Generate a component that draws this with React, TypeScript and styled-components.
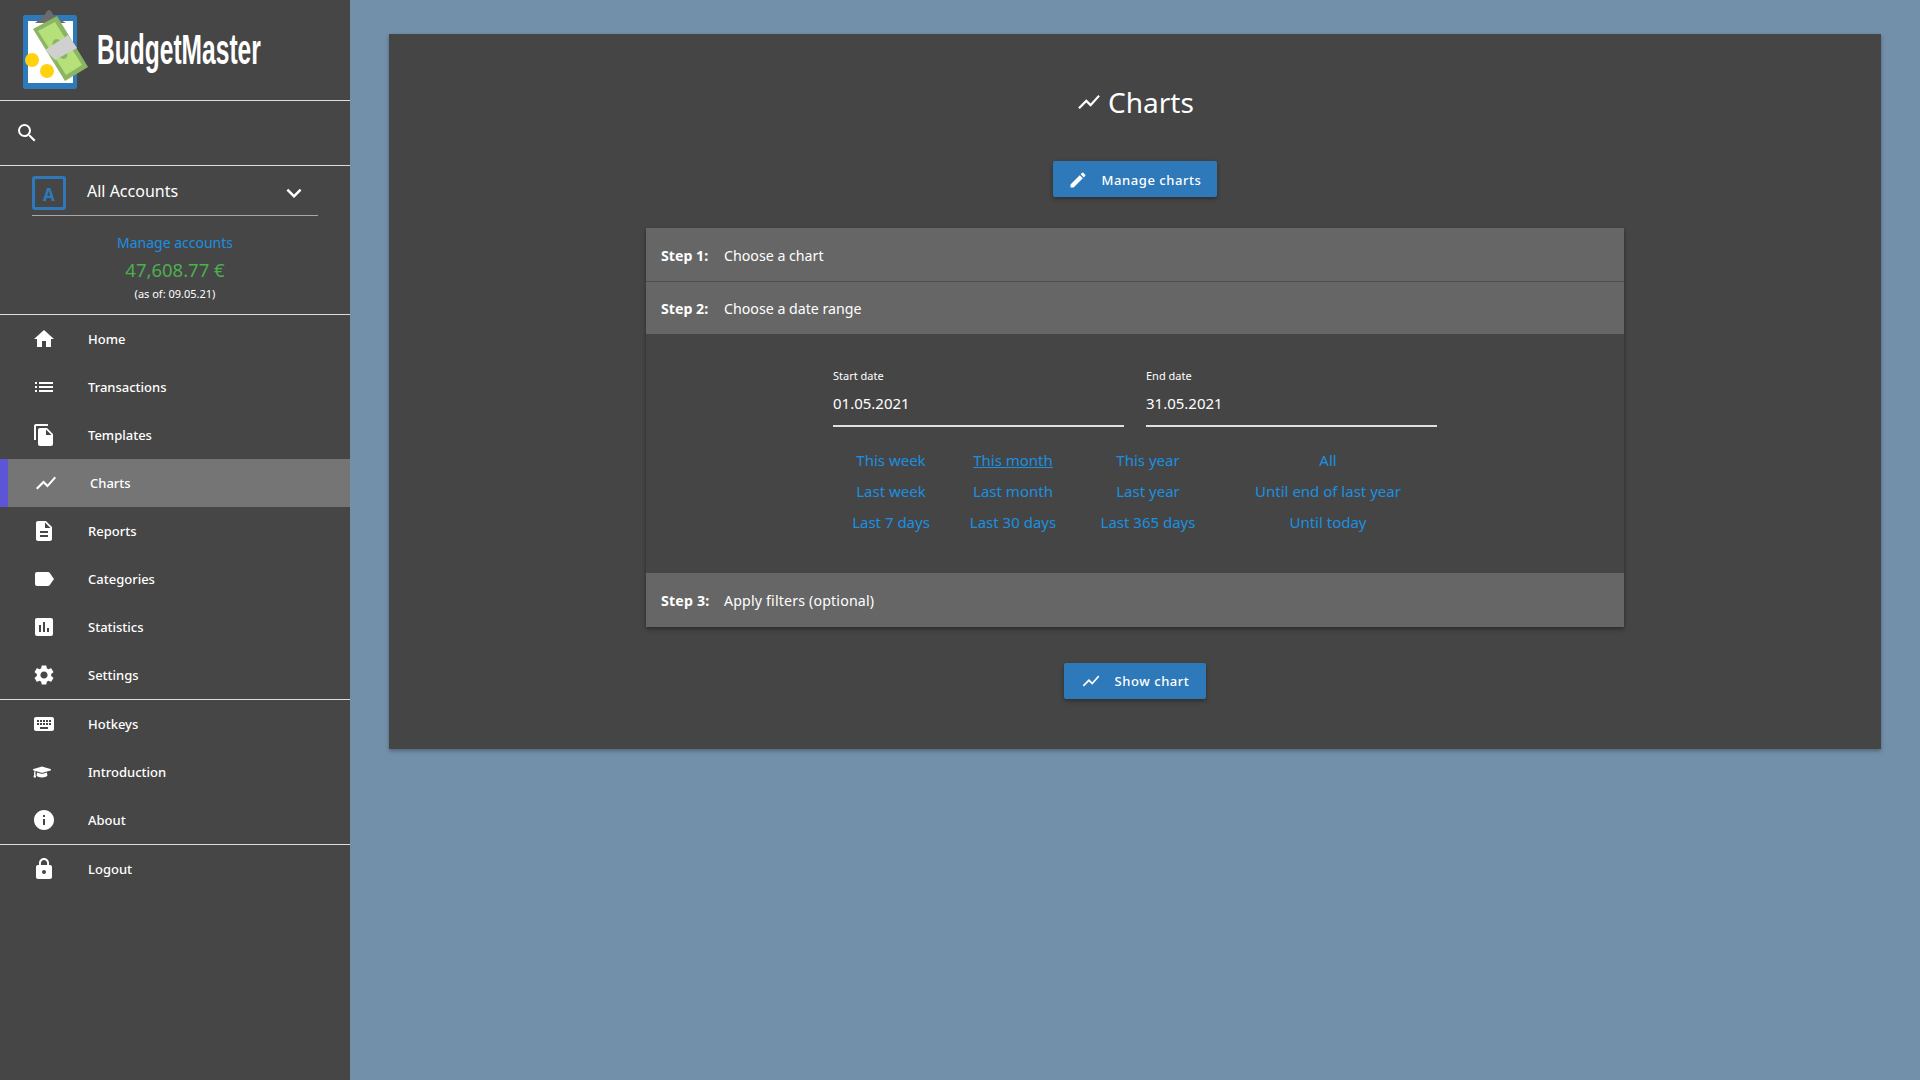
import React from "react";
import styled, { createGlobalStyle } from "styled-components";
import {
  MdAssessment,
  MdDescription,
  MdEdit,
  MdExpandMore,
  MdFileCopy,
  MdHome,
  MdInfo,
  MdKeyboard,
  MdLabel,
  MdList,
  MdLock,
  MdSearch,
  MdSettings,
  MdShowChart,
} from "react-icons/md";
import { FaGraduationCap } from "react-icons/fa";

const GlobalStyle = createGlobalStyle`
  html, body {
    margin: 0;
    padding: 0;
    background-color: #7390aa;
    font-family: "Noto Sans", "Open Sans", sans-serif;
    color: #ffffff;
  }
  * {
    box-sizing: border-box;
  }
`;

const Page = styled.div`
  display: flex;
  width: 100%;
  height: 1080px;
  overflow: hidden;
`;

const Sidebar = styled.nav`
  width: 350px;
  flex-shrink: 0;
  background-color: #464646;
  display: flex;
  flex-direction: column;
`;

const Section = styled.div`
  border-bottom: 1px solid #dcdcdc;
`;

const LogoBar = styled(Section)`
  height: 101px;
  display: flex;
  align-items: center;
  padding-left: 23px;
  gap: 8px;
`;

const LogoImage = styled.svg`
  flex-shrink: 0;
  margin-bottom: 11px;
`;

const LogoTitle = styled.div`
  font-family: "Liberation Sans", sans-serif;
  font-weight: 700;
  font-size: 42px;
  line-height: 1;
  color: #ffffff;
  transform: scaleX(0.585);
  transform-origin: left center;
  white-space: nowrap;
  margin-top: -1px;
`;

const SearchBar = styled(Section)`
  height: 65px;
  display: flex;
  align-items: center;
  padding-left: 15px;
  font-size: 24px;
`;

const AccountBox = styled(Section)`
  height: 149px;
  padding: 10px 32px 0;
  display: flex;
  flex-direction: column;
  align-items: center;
`;

const AccountSelect = styled.div`
  width: 286px;
  height: 40px;
  flex-shrink: 0;
  border-bottom: 1px solid #a8a8a8;
  display: flex;
  align-items: flex-start;
`;

const AccountIcon = styled.div`
  width: 34px;
  height: 34px;
  border: 3px solid #2e79b9;
  border-radius: 3px;
  color: #2e79b9;
  font-weight: 700;
  font-size: 17px;
  display: flex;
  align-items: center;
  justify-content: center;
  padding-top: 3px;
`;

const AccountName = styled.div`
  flex: 1;
  margin-left: 21px;
  font-size: 16px;
  line-height: 30px;
`;

const Chevron = styled.div`
  font-size: 30px;
  line-height: 0;
  margin: 2px 9px 0 0;
`;

const ManageLink = styled.a`
  margin-top: 17px;
  font-size: 14px;
  line-height: 20px;
  color: #1a90e0;
`;

const Balance = styled.div`
  margin-top: 5px;
  font-size: 18.5px;
  line-height: 24px;
  color: #4caf50;
`;

const AsOf = styled.div`
  margin-top: 4px;
  font-size: 11px;
  line-height: 16px;
`;

const NavItem = styled.a<{ $active?: boolean }>`
  height: 48px;
  display: flex;
  align-items: center;
  font-size: 13px;
  font-weight: 500;
  color: #ffffff;
  background-color: ${(props) => (props.$active ? "#757575" : "transparent")};
  border-left: ${(props) => (props.$active ? "8px solid #5c55d6" : "none")};
  padding-left: ${(props) => (props.$active ? "26px" : "32px")};
`;

const NavIcon = styled.span`
  width: 24px;
  height: 24px;
  font-size: 24px;
  line-height: 0;
  margin-right: 32px;
  display: flex;
  align-items: center;
  justify-content: center;
`;

const SmallIcon = styled(FaGraduationCap)`
  font-size: 18px;
  margin-left: -5px;
`;

const Main = styled.main`
  flex: 1;
  padding: 34px 39px 0;
`;

const Card = styled.section`
  background-color: #454545;
  height: 715px;
  box-shadow: 0 2px 4px rgba(0, 0, 0, 0.3);
  display: flex;
  flex-direction: column;
  align-items: center;
  padding-top: 46px;
`;

const Headline = styled.h1`
  margin: 0;
  height: 44px;
  font-size: 28px;
  font-weight: 400;
  line-height: 44px;
  display: flex;
  align-items: center;
  gap: 6px;
`;

const HeadlineIcon = styled(MdShowChart)`
  font-size: 26px;
`;

const Button = styled.button`
  height: 36px;
  border: none;
  border-radius: 2px;
  background-color: #2e79b9;
  color: #ffffff;
  font-family: inherit;
  font-size: 13px;
  font-weight: 500;
  letter-spacing: 0.55px;
  display: flex;
  align-items: center;
  gap: 14px;
  box-shadow: 0 2px 4px rgba(0, 0, 0, 0.35);

  svg {
    font-size: 20px;
  }
`;

const TopButton = styled(Button)`
  margin-top: 37px;
  padding: 1px 16px 0 15px;
`;

const BottomButton = styled(Button)`
  margin-top: 36px;
  padding: 0 17px;
`;

const Accordion = styled.div`
  width: 978px;
  margin-top: 31px;
  height: 399px;
  display: flex;
  flex-direction: column;
  box-shadow: 0 2px 4px rgba(0, 0, 0, 0.4);
`;

const StepHeader = styled.div`
  height: 52px;
  flex-shrink: 0;
  background-color: #666666;
  display: flex;
  align-items: center;
  padding-left: 15px;
  font-size: 14.2px;
`;

const FirstStepHeader = styled(StepHeader)`
  height: 54px;
  padding-top: 2px;
  border-bottom: 1px solid #4d4d4d;
`;

const LastStepHeader = styled(StepHeader)`
  height: 54px;
  letter-spacing: 0.16px;
`;

const StepLabel = styled.strong`
  width: 63px;
  font-weight: 700;
`;

const StepBody = styled.div`
  flex: 1;
  padding: 34px 0 0 187px;
`;

const DateRow = styled.div`
  display: flex;
  gap: 22px;
  width: 604px;
`;

const DateField = styled.div`
  width: 291px;
`;

const DateLabel = styled.div`
  font-size: 11px;
  line-height: 16px;
`;

const DateValue = styled.div`
  margin-top: 7px;
  height: 36px;
  border-bottom: 2px solid #e0e0e0;
  font-size: 15px;
  line-height: 24px;
`;

const Presets = styled.div`
  width: 604px;
  margin-top: 17px;
  display: grid;
  grid-template-columns: 116px 128px 142px 218px;
  grid-auto-rows: 31px;
  align-items: center;
  justify-items: center;
`;

const Preset = styled.a<{ $active?: boolean }>`
  font-size: 15px;
  color: #1a90e0;
  text-decoration: ${(props) => (props.$active ? "underline" : "none")};
  white-space: nowrap;
`;

function Logo() {
  return (
    <LogoImage width="66" height="90" viewBox="23 0 66 90">
      <rect x="23" y="15" width="54" height="74" rx="2" fill="#2e79b9" />
      <rect x="28" y="21" width="45" height="62" fill="#ffffff" />
      <path d="M35 23 L44 16 L47 11 Q49 9 51 11 L54 16 L66 23 Z" fill="#6b6b6b" />
      <path d="M33 29 L57 16 L88 67 L65 81 Z" fill="#8bb563" />
      <path d="M38 31 L55 22 L82 65 L66 75 Z" fill="#b5e07a" />
      <ellipse cx="60" cy="49" rx="6" ry="11" transform="rotate(-30 60 49)" fill="#8bb563" />
      <path d="M45 50 L68 35 L77 48 L55 60 Z" fill="#d0d0d0" />
      <circle cx="32" cy="60" r="7" fill="#ffd10f" />
      <circle cx="47" cy="71" r="7" fill="#ffd10f" />
    </LogoImage>
  );
}

const mainNav = [
  { label: "Home", icon: <MdHome /> },
  { label: "Transactions", icon: <MdList /> },
  { label: "Templates", icon: <MdFileCopy /> },
  { label: "Charts", icon: <MdShowChart />, active: true },
  { label: "Reports", icon: <MdDescription /> },
  { label: "Categories", icon: <MdLabel /> },
  { label: "Statistics", icon: <MdAssessment /> },
  { label: "Settings", icon: <MdSettings /> },
];

const helpNav = [
  { label: "Hotkeys", icon: <MdKeyboard /> },
  { label: "Introduction", icon: <SmallIcon /> },
  { label: "About", icon: <MdInfo /> },
];

const presets = [
  "This week",
  "This month",
  "This year",
  "All",
  "Last week",
  "Last month",
  "Last year",
  "Until end of last year",
  "Last 7 days",
  "Last 30 days",
  "Last 365 days",
  "Until today",
];

const App: React.FC = () => {
  return (
    <Page>
      <GlobalStyle />
      <Sidebar>
        <LogoBar>
          <Logo />
          <LogoTitle>BudgetMaster</LogoTitle>
        </LogoBar>
        <SearchBar>
          <MdSearch />
        </SearchBar>
        <AccountBox>
          <AccountSelect>
            <AccountIcon>A</AccountIcon>
            <AccountName>All Accounts</AccountName>
            <Chevron>
              <MdExpandMore />
            </Chevron>
          </AccountSelect>
          <ManageLink>Manage accounts</ManageLink>
          <Balance>47,608.77 €</Balance>
          <AsOf>(as of: 09.05.21)</AsOf>
        </AccountBox>
        <Section>
          {mainNav.map((item) => (
            <NavItem key={item.label} $active={item.active}>
              <NavIcon>{item.icon}</NavIcon>
              {item.label}
            </NavItem>
          ))}
        </Section>
        <Section>
          {helpNav.map((item) => (
            <NavItem key={item.label}>
              <NavIcon>{item.icon}</NavIcon>
              {item.label}
            </NavItem>
          ))}
        </Section>
        <NavItem>
          <NavIcon>
            <MdLock />
          </NavIcon>
          Logout
        </NavItem>
      </Sidebar>
      <Main>
        <Card>
          <Headline>
            <HeadlineIcon />
            Charts
          </Headline>
          <TopButton>
            <MdEdit />
            Manage charts
          </TopButton>
          <Accordion>
            <FirstStepHeader>
              <StepLabel>Step 1:</StepLabel>
              Choose a chart
            </FirstStepHeader>
            <StepHeader>
              <StepLabel>Step 2:</StepLabel>
              Choose a date range
            </StepHeader>
            <StepBody>
              <DateRow>
                <DateField>
                  <DateLabel>Start date</DateLabel>
                  <DateValue>01.05.2021</DateValue>
                </DateField>
                <DateField>
                  <DateLabel>End date</DateLabel>
                  <DateValue>31.05.2021</DateValue>
                </DateField>
              </DateRow>
              <Presets>
                {presets.map((preset) => (
                  <Preset key={preset} $active={preset === "This month"}>
                    {preset}
                  </Preset>
                ))}
              </Presets>
            </StepBody>
            <LastStepHeader>
              <StepLabel>Step 3:</StepLabel>
              Apply filters (optional)
            </LastStepHeader>
          </Accordion>
          <BottomButton>
            <MdShowChart />
            Show chart
          </BottomButton>
        </Card>
      </Main>
    </Page>
  );
};

export default App;
